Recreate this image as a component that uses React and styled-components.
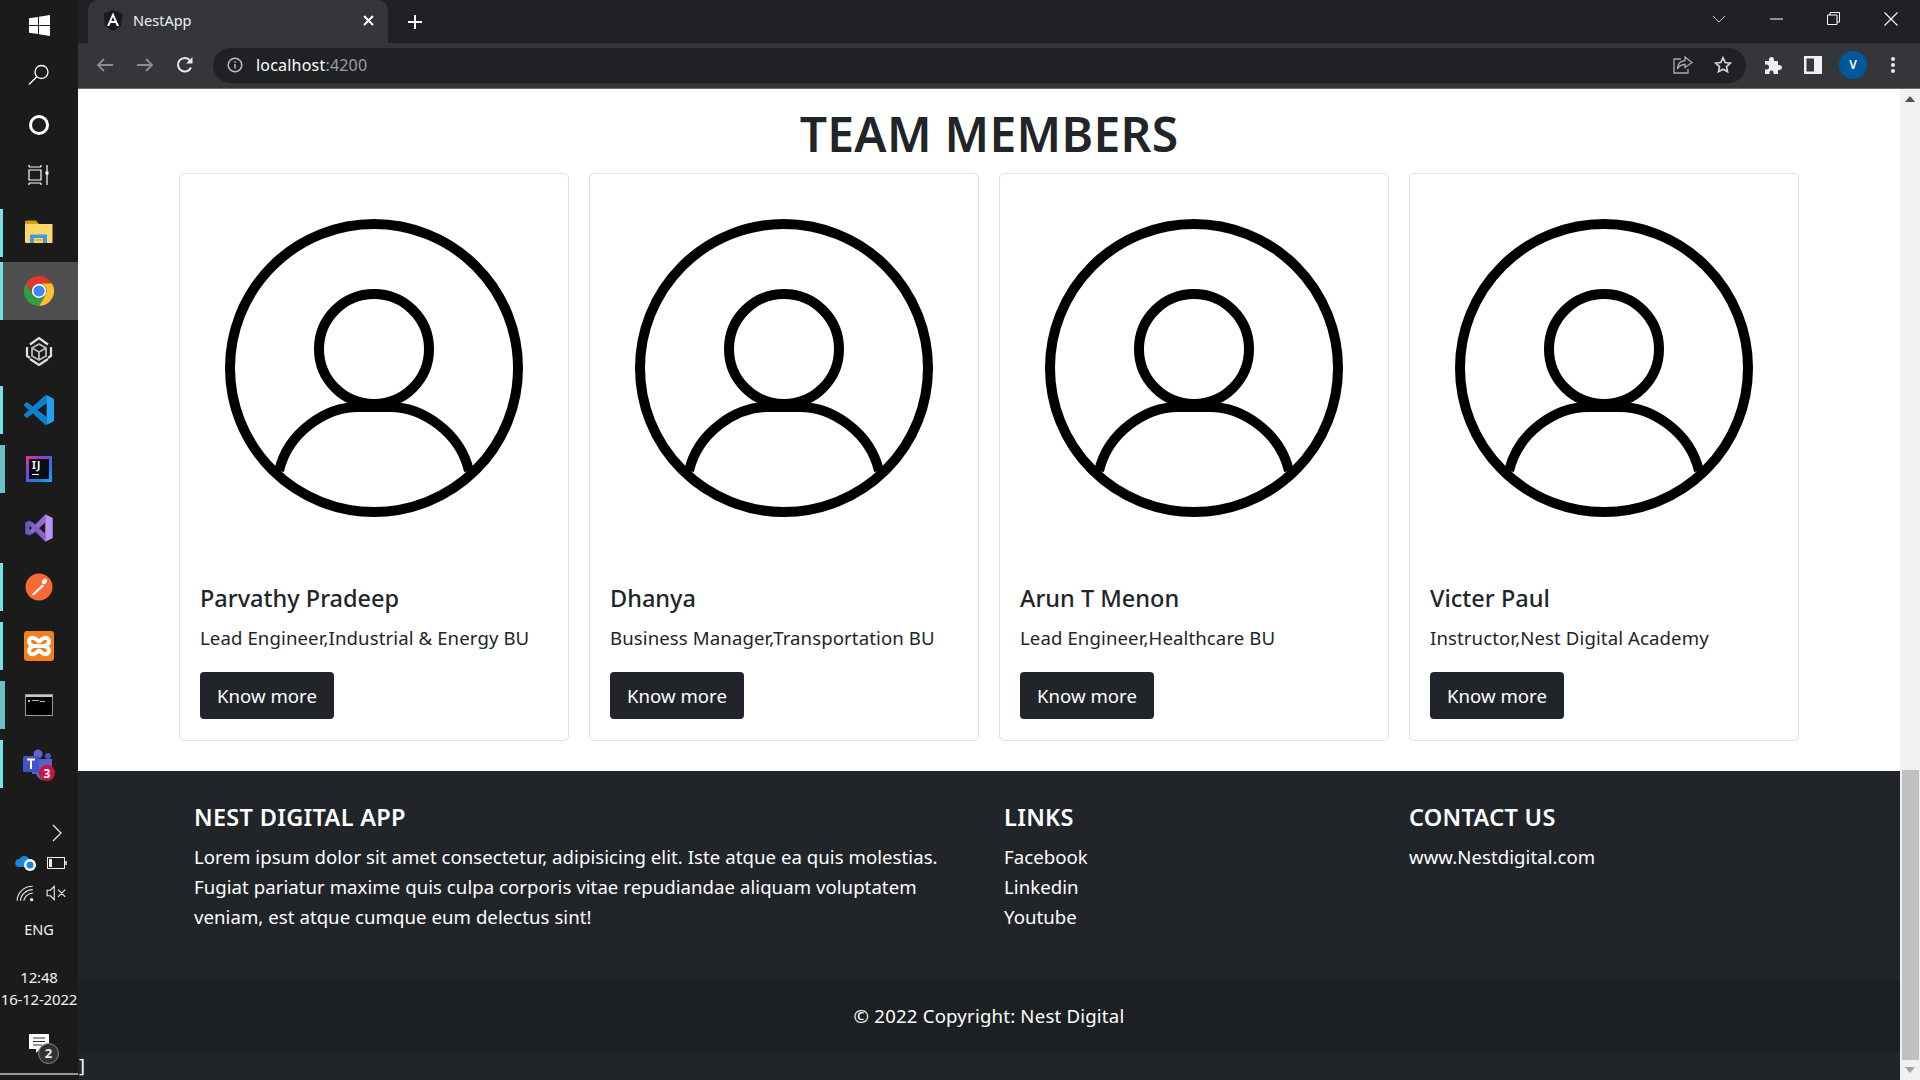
import React from "react"
import styled, { createGlobalStyle } from "styled-components"

const GlobalStyle = createGlobalStyle`
  html, body {
    margin: 0;
    padding: 0;
    height: 100%;
    overflow: hidden;
    background: #fff;
  }
  * {
    box-sizing: border-box;
  }
  body {
    font-family: "Noto Sans", "Open Sans", sans-serif;
    color: #212529;
  }
`

const Screen = styled.div`
  display: flex;
  width: 1920px;
  height: 1080px;
  overflow: hidden;
`

/* windows taskbar */
const Taskbar = styled.aside`
  width: 78px;
  flex: none;
  display: flex;
  flex-direction: column;
  background: #1b1b1b;
  color: #f2f2f2;
`

const SystemButton = styled.div`
  height: 50px;
  display: flex;
  align-items: center;
  justify-content: center;
`

const AppList = styled.div`
  margin-top: 3px;
  display: flex;
  flex-direction: column;
`

const AppSlot = styled.div`
  position: relative;
  height: ${props => (props.$active ? "58px" : "59px")};
  margin-bottom: ${props => (props.$active ? "1px" : "0")};
  display: flex;
  align-items: center;
  justify-content: center;
  background: ${props => (props.$active ? "#4f4f4f" : "transparent")};

  &::before {
    content: "";
    display: ${props => (props.$bar ? "block" : "none")};
    position: absolute;
    left: 0;
    top: ${props => (props.$active ? "0" : "6px")};
    bottom: ${props => (props.$active ? "0" : "5px")};
    width: ${props => (props.$wide ? "5px" : "3px")};
    background: ${props => (props.$wide ? "#67c3c9" : "#76e0e6")};
  }
`

const Tray = styled.div`
  margin-top: auto;
  display: flex;
  flex-direction: column;
  padding-bottom: 5px;
`

const TrayRow = styled.div`
  height: 30px;
  padding-left: 10px;
  display: grid;
  grid-template-columns: 31px 31px;
  align-items: center;
  justify-items: center;
`

const Lang = styled.div`
  height: 42px;
  line-height: 42px;
  text-align: center;
  font-size: 14.5px;
`

const Clock = styled.div`
  margin-top: 16px;
  text-align: center;
  font-size: 15px;
  line-height: 22px;
  white-space: nowrap;
  letter-spacing: -0.2px;
`

const Notes = styled.div`
  position: relative;
  margin: 21px 0 12px;
  height: 30px;
  padding-top: 3px;
  display: flex;
  justify-content: center;
`

const NoteBadge = styled.span`
  position: absolute;
  left: 38px;
  top: 12px;
  width: 21px;
  height: 21px;
  border-radius: 50%;
  background: #333;
  border: 1px solid #8a8a8a;
  color: #eee;
  font-size: 13px;
  font-weight: 700;
  line-height: 19px;
  text-align: center;
`

const TrayLine = styled.div`
  height: 2px;
  background: #9a9a9a;
`

/* browser frame */
const Browser = styled.div`
  flex: 1;
  min-width: 0;
  display: flex;
  flex-direction: column;
`

const TabStrip = styled.div`
  height: 43px;
  flex: none;
  display: flex;
  align-items: stretch;
  padding-left: 10px;
  background: #202124;
  color: #fff;
`

const Tab = styled.div`
  width: 300px;
  display: flex;
  align-items: center;
  padding: 0 14px 2px 15px;
  background: #35363a;
  border-radius: 10px 10px 0 0;
  font-size: 14.5px;
`

const TabTitle = styled.span`
  margin: 0 0 2px 10px;
  flex: 1;
  color: #eef1f5;
`

const NewTab = styled.div`
  width: 54px;
  display: flex;
  align-items: center;
  justify-content: center;
`

const WindowButtons = styled.div`
  margin-left: auto;
  display: flex;
  align-items: center;
  padding-bottom: 6px;
`

const WindowButton = styled.div`
  width: 57.5px;
  display: flex;
  justify-content: center;
`

const Toolbar = styled.div`
  height: 46px;
  flex: none;
  display: flex;
  align-items: center;
  padding: 0 0 1px 7px;
  background: #35363a;
  border-bottom: 1px solid #6a6b6e;
`

const NavButton = styled.div`
  width: 40px;
  height: 36px;
  display: flex;
  align-items: center;
  justify-content: center;
`

const Omnibox = styled.div`
  width: 1533px;
  height: 35px;
  margin-left: 8px;
  padding: 0 14px 0 14px;
  display: flex;
  align-items: center;
  border-radius: 18px;
  background: #202124;
  font-size: 16px;
`

const Url = styled.span`
  margin-left: 13px;
  color: #fff;
  letter-spacing: 0.2px;

  span {
    color: #9aa0a6;
  }
`

const OmniActions = styled.div`
  margin-left: auto;
  display: flex;
  align-items: center;
  gap: 21px;
`

const ToolActions = styled.div`
  margin-left: 7px;
  display: flex;
  align-items: center;
`

const ToolSlot = styled.div`
  width: 40px;
  display: flex;
  justify-content: center;
`

const Avatar = styled.div`
  width: 28px;
  height: 28px;
  border-radius: 50%;
  background: #01579b;
  color: #fff;
  font-size: 12px;
  font-weight: 600;
  line-height: 28px;
  text-align: center;
`

/* page */
const Viewport = styled.div`
  flex: 1;
  min-height: 0;
  display: flex;
`

const Page = styled.main`
  flex: 1;
  min-width: 0;
  display: flex;
  flex-direction: column;
`

const Title = styled.h1`
  margin: 0;
  height: 84px;
  line-height: 90px;
  text-align: center;
  font-size: 48px;
  font-weight: 600;
  letter-spacing: 0.3px;
  color: #212529;
`

const CardRow = styled.section`
  display: grid;
  grid-template-columns: repeat(4, 390px);
  gap: 20px;
  padding: 0 0 30px 101px;
`

const Card = styled.article`
  height: 568px;
  display: flex;
  flex-direction: column;
  border: 1px solid #dfdfdf;
  border-radius: 5px;
`

const AvatarArt = styled.svg`
  display: block;
  width: 388px;
  height: 392px;
  flex: none;
`

const CardBody = styled.div`
  padding: 18px 20px 20px;
`

const Name = styled.h5`
  margin: 0 0 10px;
  font-size: 23.5px;
  line-height: 29px;
  font-weight: 500;
`

const Role = styled.p`
  margin: 0 0 20px;
  font-size: 18.6px;
  line-height: 29px;
  letter-spacing: 0.1px;
`

const Button = styled.button`
  display: block;
  width: 134px;
  height: 47px;
  padding: 0;
  border: 0;
  border-radius: 4px;
  background: #212529;
  color: #fff;
  font-family: inherit;
  font-size: 18.6px;
`

const Footer = styled.footer`
  flex: 1;
  display: flex;
  flex-direction: column;
  background: #212529;
  color: #fff;
`

const FooterMain = styled.div`
  height: 210px;
  display: grid;
  grid-template-columns: 810px 405px 405px;
  padding: 32px 0 0 116px;
`

const FooterHeading = styled.h5`
  margin: 0 0 10px;
  font-size: 23.5px;
  line-height: 29px;
  font-weight: 600;
  letter-spacing: 0.3px;
`

const FooterText = styled.p`
  margin: 0;
  font-size: 18.6px;
  line-height: 30px;
  letter-spacing: 0.05px;
`

const FooterLink = styled.a`
  display: block;
  font-size: 18.6px;
  line-height: 30px;
  letter-spacing: 0.05px;
  color: #fff;
  text-decoration: none;
`

const Copyright = styled.div`
  height: 70px;
  line-height: 70px;
  text-align: center;
  background: #1c2023;
  font-size: 18.6px;
  letter-spacing: 0.2px;
`

const Stray = styled.div`
  height: 29px;
  line-height: 28px;
  font-size: 18px;
  padding-left: 1px;
`

const Scrollbar = styled.div`
  width: 20px;
  flex: none;
  display: flex;
  flex-direction: column;
  background: #f1f1f1;
`

const ScrollArrow = styled.div`
  height: 20px;
  flex: none;
  display: flex;
  align-items: center;
  justify-content: center;
`

const ScrollThumb = styled.div`
  width: 17px;
  height: 290px;
  margin: auto 0 0 2px;
  background: #c1c1c1;
`

/* icons */
const WindowsLogo = () => (
  <svg width="21" height="21" viewBox="0 0 21 21" fill="#fff">
    <path d="M0 3.2 9 2v8H0zM10 1.8 21 0v10H10zM0 11h9v8l-9-1.2zM10 11h11v10l-11-1.8z" />
  </svg>
)

const SearchIcon = () => (
  <svg width="22" height="22" viewBox="0 0 22 22" fill="none" stroke="#fff" strokeWidth="1.3">
    <circle cx="13.5" cy="8" r="6.5" />
    <path d="M8.8 12.7 1 20.5" />
  </svg>
)

const CortanaIcon = () => (
  <svg width="22" height="22" viewBox="0 0 22 22" fill="none" stroke="#fff" strokeWidth="3">
    <circle cx="11" cy="11" r="8.5" />
  </svg>
)

const TaskViewIcon = () => (
  <svg width="22" height="22" viewBox="0 0 22 22" fill="none" stroke="#fff" strokeWidth="1.2">
    <path d="M1 3h12M13 1v2M1 1v2M1 6h12v10H1zM1 19h12M1 19v2M13 19v2M19 1v20" />
    <rect x="17.5" y="7.5" width="3" height="3" fill="#fff" stroke="none" />
  </svg>
)

const ExplorerIcon = () => (
  <svg width="30" height="24" viewBox="0 0 30 24" style={{ marginBottom: 2 }}>
    <path d="M1 2a1.5 1.5 0 0 1 1.5-1.500H12l3 3.500H1z" fill="#d69c0b" />
    <path d="M1 4h27.500v18a1 1 0 0 1-1 1H2a1 1 0 0 1-1-1z" fill="#fcd86a" />
    <path d="M6 23v-7.500a1 1 0 0 1 1-1h15a1 1 0 0 1 1 1V23h-4v-5h-9v5z" fill="#3f9bdc" />
    <path d="M11 19h8v2h-8z" fill="#e9b93a" />
  </svg>
)

const ChromeIcon = () => (
  <svg width="30" height="30" viewBox="1 1 22 22">
    <path d="M12 1a11 11 0 0 1 9.53 5.500H12a5.500 5.500 0 0 0-4.760 8.250L2.470 6.500A11 11 0 0 1 12 1z" fill="#e0392c" />
    <path d="M21.530 6.500A11 11 0 0 1 12 23l4.760-8.250A5.500 5.500 0 0 0 12 6.500z" fill="#fbc02d" />
    <path d="M12 23A11 11 0 0 1 2.470 6.500l4.770 8.250A5.500 5.500 0 0 0 16.760 14.750z" fill="#2f9e44" />
    <circle cx="12" cy="12" r="5.300" fill="#fff" />
    <circle cx="12" cy="12" r="4.100" fill="#4285f4" />
  </svg>
)

const CubeIcon = () => (
  <svg width="28" height="30" viewBox="0 0 28 30" fill="none" stroke="#e2e2e2" strokeWidth="1.800">
    <path d="M5 8.500 14 2l9 6.500M2 11v9l3 2M26 11v9l-3 2M5 23l9 6 9-6" strokeWidth="2.200" />
    <path d="M14 8l7 4v8l-7 4-7-4v-8zM7 12l7 4 7-4M14 16v8" stroke="#bdbdbd" />
  </svg>
)

const VsCodeIcon = () => (
  <svg width="30" height="30" viewBox="0 0 24 24">
    <clipPath id="vscode-left">
      <rect x="0" y="0" width="18" height="24" />
    </clipPath>
    <clipPath id="vscode-right">
      <rect x="18" y="0" width="6" height="24" />
    </clipPath>
    <path
      clipPath="url(#vscode-left)"
      fill="#0f7fcb"
      d="M23.150 2.587 18.210.21a1.494 1.494 0 0 0-1.705.29l-9.460 8.630-4.120-3.128a.999.999 0 0 0-1.276.057L.327 7.261A1 1 0 0 0 .326 8.740L3.899 12 .326 15.260a1 1 0 0 0 .001 1.479L1.650 17.940a.999.999 0 0 0 1.276.057l4.120-3.128 9.460 8.630a1.492 1.492 0 0 0 1.704.29l4.942-2.377A1.500 1.500 0 0 0 24 20.060V3.939a1.500 1.500 0 0 0-.850-1.352zm-5.146 14.861L10.826 12l7.178-5.448v10.896z"
    />
    <path
      clipPath="url(#vscode-right)"
      fill="#1ea1f1"
      d="M23.150 2.587 18.210.21a1.494 1.494 0 0 0-1.705.29l-9.460 8.630-4.120-3.128a.999.999 0 0 0-1.276.057L.327 7.261A1 1 0 0 0 .326 8.740L3.899 12 .326 15.260a1 1 0 0 0 .001 1.479L1.650 17.940a.999.999 0 0 0 1.276.057l4.120-3.128 9.460 8.630a1.492 1.492 0 0 0 1.704.29l4.942-2.377A1.500 1.500 0 0 0 24 20.060V3.939a1.500 1.500 0 0 0-.850-1.352zm-5.146 14.861L10.826 12l7.178-5.448v10.896z"
    />
  </svg>
)

const IdeaBox = styled.div`
  width: 26px;
  height: 26px;
  padding: 4px 6px;
  background: linear-gradient(135deg, #f0308a 0%, #7b46d8 35%, #1e7df0 70%, #14b4f0 100%);
  position: relative;

  &::before {
    content: "";
    position: absolute;
    inset: 3px;
    background: #0c0c14;
  }
`

const IdeaText = styled.span`
  position: relative;
  display: block;
  font-size: 10px;
  font-weight: 700;
  line-height: 10px;
  color: #fff;
  letter-spacing: 1px;
`

const IdeaLine = styled.span`
  position: relative;
  display: block;
  width: 7px;
  height: 1px;
  margin-top: 4px;
  background: #fff;
`

const IdeaIcon = () => (
  <IdeaBox>
    <IdeaText>IJ</IdeaText>
    <IdeaLine />
  </IdeaBox>
)

const VisualStudioIcon = () => (
  <svg width="30" height="30" viewBox="0 0 24 24">
    <path d="M1 7.500 4.500 6l5.500 4L7 12l-2.500-2v4L7 12l3 2-5.500 4L1 16.500z" fill="#7557ba" />
    <path d="M17 1 4.500 14 7 16.500 17 7.500z" fill="#8f6bd0" />
    <path d="M17 23 4.500 10 7 7.500l10 9z" fill="#8461c8" />
    <path d="M17 1l6 3v16l-6 3z" fill="#ba94f3" />
  </svg>
)

const PostmanIcon = () => (
  <svg width="28" height="28" viewBox="0 0 28 28">
    <circle cx="14" cy="14" r="13.500" fill="#f76935" />
    <path d="M7 21.500 17 11.500l1.800 1.800L8.500 22.500z" fill="#fff" />
    <ellipse cx="19.500" cy="8.500" rx="2.300" ry="3" fill="#fff" transform="rotate(35 19.500 8.500)" />
  </svg>
)

const XamppIcon = () => (
  <svg width="30" height="30" viewBox="0 0 30 30">
    <rect width="30" height="30" rx="3" fill="#f07f1e" />
    <path
      d="M11 7.500C7 5.500 5 8 5 10.500c0 2.500 2 3.500 4 4.500-2 1-4 2-4 4.500 0 2.500 2 5 6 3 2.500-1.200 3-3 4-3s1.500 1.800 4 3c4 2 6-.5 6-3 0-2.500-2-3.500-4-4.500 2-1 4-2 4-4.500 0-2.500-2-5-6-3-2.500 1.200-3 3-4 3s-1.500-1.800-4-3zM9 15h12"
      fill="none"
      stroke="#fff"
      strokeWidth="4"
    />
  </svg>
)

const TerminalIcon = () => (
  <svg width="28" height="22" viewBox="0 0 28 22">
    <rect x="0.500" y="0.500" width="27" height="21" fill="#000" stroke="#9a9a9a" />
    <path d="M1 1h26v2H1z" fill="#c8c8c8" />
    <path d="M3 6h2v2H3zM7 6h7v1H7zM15 7h5v1h-5z" fill="#bdbdbd" />
  </svg>
)

const TeamsIcon = () => (
  <svg width="34" height="34" viewBox="0 0 34 34" style={{ marginTop: 2 }}>
    <circle cx="16" cy="6" r="4.500" fill="#6264c8" />
    <circle cx="26" cy="8" r="3" fill="#4b53bc" />
    <path d="M10 11h20v11a8 8 0 0 1-16 4h-4z" fill="#5a5fc4" />
    <rect x="1" y="8" width="16" height="16" rx="1.500" fill="#4453c4" />
    <path d="M5 11.500h8M9 11.500V21" stroke="#fff" strokeWidth="2" fill="none" />
    <circle cx="25" cy="25" r="8" fill="#c4173f" />
    <text x="25" y="29.500" textAnchor="middle" fontSize="12" fontWeight="700" fill="#fff" fontFamily="Noto Sans">3</text>
  </svg>
)

const ChevronRight = () => (
  <svg width="12" height="18" viewBox="0 0 12 18" fill="none" stroke="#eee" strokeWidth="1.200">
    <path d="M2 1l8 8-8 8" />
  </svg>
)

const OneDriveIcon = () => (
  <svg width="22" height="18" viewBox="0 0 22 18">
    <path d="M4 13a4 4 0 0 1 .5-8 5.500 5.500 0 0 1 10 .5A3.500 3.500 0 0 1 17 13z" fill="#1b82e0" />
    <circle cx="15" cy="11" r="6" fill="#fff" />
    <circle cx="15" cy="11" r="3.500" fill="#1b82e0" />
  </svg>
)

const BatteryIcon = () => (
  <svg width="20" height="12" viewBox="0 0 20 12" fill="none" stroke="#eee">
    <rect x="0.500" y="0.500" width="17" height="11" />
    <rect x="2" y="2" width="3" height="8" fill="#eee" stroke="none" />
    <path d="M19 4v4" strokeWidth="1.500" />
  </svg>
)

const WifiIcon = () => (
  <svg width="19" height="17" viewBox="0 0 17 15" fill="none" stroke="#e8e8e8">
    <path d="M1 14C1 7 7 1 15 1M4 14c0-5 5-10 11-10M7 14c0-3 4-7 8-7" />
    <circle cx="14" cy="13" r="1.500" fill="#eee" stroke="none" />
  </svg>
)

const MuteIcon = () => (
  <svg width="22" height="16" viewBox="0 0 20 14" fill="none" stroke="#f2f2f2">
    <path d="M1 4.500h3L7.500 1v12L4 9.500H1zM11 4l6.500 6.500M17.500 4 11 10.500" />
  </svg>
)

const NoteIcon = () => (
  <svg width="20" height="20" viewBox="0 0 20 20">
    <path d="M0 0h20v15h-9l-4 4v-4H0z" fill="#fff" />
    <path d="M4 4h12M4 7.500h12M4 11h9" stroke="#333" />
  </svg>
)

const AngularIcon = () => (
  <svg width="20" height="21" viewBox="0 0 20 21">
    <path d="M10 0 .5 3.300 2 15.800 10 21l8-5.200 1.500-12.500z" fill="#1a1a1d" />
    <path d="M10 2.500 4 16h2.300l1.200-3h5l1.200 3H16zm-1.700 8.600L10 7l1.700 4.100z" fill="#fff" />
  </svg>
)

const CloseGlyph = () => (
  <svg width="11" height="11" viewBox="0 0 11 11" stroke="#fff" strokeWidth="2">
    <path d="M1 1l9 9M10 1l-9 9" />
  </svg>
)

const PlusGlyph = () => (
  <svg width="14" height="14" viewBox="0 0 14 14" stroke="#fff" strokeWidth="2">
    <path d="M7 0v14M0 7h14" />
  </svg>
)

const Arrow = ({ right }) => (
  <svg width="18" height="16" viewBox="0 0 18 16" fill="none" stroke="#8b8d90" strokeWidth="1.800">
    {right ? <path d="M1 8h15M10 2l6 6-6 6" /> : <path d="M17 8H2M8 2 2 8l6 6" />}
  </svg>
)

const ReloadIcon = () => (
  <svg width="18" height="18" viewBox="0 0 18 18" fill="none" stroke="#e8eaed" strokeWidth="2">
    <path d="M15 11.500A6.800 6.800 0 1 1 14 4.300" />
    <path d="M16.500 1v6.500H10z" fill="#e8eaed" stroke="none" />
  </svg>
)

const InfoIcon = () => (
  <svg width="16" height="16" viewBox="0 0 16 16" fill="none" stroke="#bcbfc3" strokeWidth="1.500">
    <circle cx="8" cy="8" r="6.800" />
    <path d="M8 7v4.500M8 4.200v1.600" />
  </svg>
)

const ShareIcon = () => (
  <svg width="20" height="18" viewBox="0 0 20 18" fill="none" stroke="#a9abae" strokeWidth="1.300">
    <path d="M8 3H1v14h14v-4" />
    <path d="M12 1l7 5.500-7 5V8.500C8 8.500 6 10 4.500 13c0-5 3-8 7.500-8.500z" />
  </svg>
)

const StarIcon = () => (
  <svg width="18" height="18" viewBox="0 0 18 18" fill="none" stroke="#d4d5d7" strokeWidth="1.700">
    <path d="m9 1.800 2.200 4.700 5.100.6-3.800 3.500 1 5.100L9 13.200l-4.500 2.500 1-5.100-3.800-3.500 5.100-.6z" />
  </svg>
)

const PuzzleIcon = () => (
  <svg width="18" height="18" viewBox="0 0 18 18" fill="#eef0f2">
    <path d="M1 5h4V3.500a2.500 2.500 0 0 1 5 0V5h4v4h1.500a2.500 2.500 0 0 1 0 5H14v4H9.500v-1.500a2 2 0 0 0-4 0V18H1v-4.500h1.500a2.500 2.500 0 0 0 0-5H1z" />
  </svg>
)

const SidePanelIcon = () => (
  <svg width="18" height="18" viewBox="0 0 18 18">
    <path d="M0 0h18v18H0zM2.500 2.500v13H10v-13z" fill="#eef0f2" fillRule="evenodd" />
  </svg>
)

const DotsIcon = () => (
  <svg width="6" height="18" viewBox="0 0 6 18" fill="#e8eaed">
    <circle cx="3" cy="3" r="2" />
    <circle cx="3" cy="9" r="2" />
    <circle cx="3" cy="15" r="2" />
  </svg>
)

const PersonArt = () => (
  <AvatarArt viewBox="0 0 388 392" fill="none" stroke="#000" strokeWidth="10">
    <circle cx="194" cy="194" r="144" />
    <circle cx="194" cy="175" r="55" />
    <path d="M99 297C108 258 146 233 178 233H210C242 233 280 258 289 297" />
  </AvatarArt>
)

const apps = [
  { icon: <ExplorerIcon />, bar: true },
  { icon: <ChromeIcon />, bar: true, active: true },
  { icon: <CubeIcon /> },
  { icon: <VsCodeIcon />, bar: true },
  { icon: <IdeaIcon />, bar: true, wide: true },
  { icon: <VisualStudioIcon /> },
  { icon: <PostmanIcon />, bar: true },
  { icon: <XamppIcon />, bar: true },
  { icon: <TerminalIcon />, bar: true, wide: true },
  { icon: <TeamsIcon />, bar: true },
]

const team = [
  { name: "Parvathy Pradeep", role: "Lead Engineer,Industrial & Energy BU" },
  { name: "Dhanya", role: "Business Manager,Transportation BU" },
  { name: "Arun T Menon", role: "Lead Engineer,Healthcare BU" },
  { name: "Victer Paul", role: "Instructor,Nest Digital Academy" },
]

const App = () => (
  <Screen>
    <GlobalStyle />
    <Taskbar>
      <SystemButton><WindowsLogo /></SystemButton>
      <SystemButton><SearchIcon /></SystemButton>
      <SystemButton><CortanaIcon /></SystemButton>
      <SystemButton><TaskViewIcon /></SystemButton>
      <AppList>
        {apps.map((app, i) => (
          <AppSlot key={i} $bar={app.bar} $active={app.active} $wide={app.wide}>
            {app.icon}
          </AppSlot>
        ))}
      </AppList>
      <Tray>
        <TrayRow><span /><ChevronRight /></TrayRow>
        <TrayRow><OneDriveIcon /><BatteryIcon /></TrayRow>
        <TrayRow><WifiIcon /><MuteIcon /></TrayRow>
        <Lang>ENG</Lang>
        <Clock>12:48<br />16-12-2022</Clock>
        <Notes>
          <NoteIcon />
          <NoteBadge>2</NoteBadge>
        </Notes>
        <TrayLine />
      </Tray>
    </Taskbar>
    <Browser>
      <TabStrip>
        <Tab>
          <AngularIcon />
          <TabTitle>NestApp</TabTitle>
          <CloseGlyph />
        </Tab>
        <NewTab><PlusGlyph /></NewTab>
        <WindowButtons>
          <WindowButton>
            <svg width="14" height="8" viewBox="0 0 14 8" fill="none" stroke="#c8c9cb"><path d="M1 1l6 6 6-6" /></svg>
          </WindowButton>
          <WindowButton>
            <svg width="13" height="2" viewBox="0 0 13 2" stroke="#fff"><path d="M0 1h13" /></svg>
          </WindowButton>
          <WindowButton>
            <svg width="13" height="13" viewBox="0 0 13 13" fill="none" stroke="#fff"><path d="M.5 3h9.500v9.500H.5zM3 3V.5h9.500V10H10" /></svg>
          </WindowButton>
          <WindowButton>
            <svg width="14" height="14" viewBox="0 0 14 14" stroke="#fff" strokeWidth="1.100"><path d="M.5.5l13 13M13.500.5l-13 13" /></svg>
          </WindowButton>
        </WindowButtons>
      </TabStrip>
      <Toolbar>
        <NavButton><Arrow /></NavButton>
        <NavButton><Arrow right /></NavButton>
        <NavButton><ReloadIcon /></NavButton>
        <Omnibox>
          <InfoIcon />
          <Url>localhost<span>:4200</span></Url>
          <OmniActions>
            <ShareIcon />
            <StarIcon />
          </OmniActions>
        </Omnibox>
        <ToolActions>
          <ToolSlot><PuzzleIcon /></ToolSlot>
          <ToolSlot><SidePanelIcon /></ToolSlot>
          <ToolSlot><Avatar>V</Avatar></ToolSlot>
          <ToolSlot><DotsIcon /></ToolSlot>
        </ToolActions>
      </Toolbar>
      <Viewport>
        <Page>
          <Title>TEAM MEMBERS</Title>
          <CardRow>
            {team.map(person => (
              <Card key={person.name}>
                <PersonArt />
                <CardBody>
                  <Name>{person.name}</Name>
                  <Role>{person.role}</Role>
                  <Button>Know more</Button>
                </CardBody>
              </Card>
            ))}
          </CardRow>
          <Footer>
            <FooterMain>
              <div>
                <FooterHeading>NEST DIGITAL APP</FooterHeading>
                <FooterText>
                  Lorem ipsum dolor sit amet consectetur, adipisicing elit. Iste atque ea quis molestias.
                  <br />
                  Fugiat pariatur maxime quis culpa corporis vitae repudiandae aliquam voluptatem
                  <br />
                  veniam, est atque cumque eum delectus sint!
                </FooterText>
              </div>
              <div>
                <FooterHeading>LINKS</FooterHeading>
                <FooterLink href="#">Facebook</FooterLink>
                <FooterLink href="#">Linkedin</FooterLink>
                <FooterLink href="#">Youtube</FooterLink>
              </div>
              <div>
                <FooterHeading>CONTACT US</FooterHeading>
                <FooterLink href="#">www.Nestdigital.com</FooterLink>
              </div>
            </FooterMain>
            <Copyright>© 2022 Copyright: Nest Digital</Copyright>
            <Stray>]</Stray>
          </Footer>
        </Page>
        <Scrollbar>
          <ScrollArrow>
            <svg width="10" height="6" viewBox="0 0 10 6" fill="#505050"><path d="M5 0l5 6H0z" /></svg>
          </ScrollArrow>
          <ScrollThumb />
          <ScrollArrow>
            <svg width="10" height="6" viewBox="0 0 10 6" fill="#a3a3a3"><path d="M5 6 0 0h10z" /></svg>
          </ScrollArrow>
        </Scrollbar>
      </Viewport>
    </Browser>
  </Screen>
)

export default App
